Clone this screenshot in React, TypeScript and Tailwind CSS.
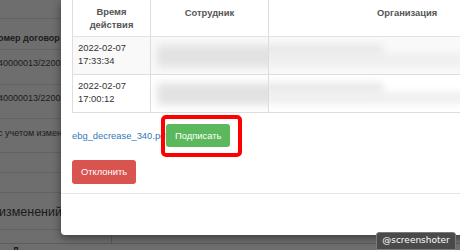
import React from 'react';

const bgRows = [
  { h: 'h-[19px]', text: '', cls: '' },
  { h: 'h-[31px]', text: 'омер договор', cls: 'font-bold items-end pb-[4px]' },
  { h: 'h-[35px]', text: '40000013/22002', cls: 'items-start pt-[7px]' },
  { h: 'h-[34px]', text: '40000013/22002', cls: 'items-start pt-[7px]' },
  { h: 'h-[34px]', text: 'с учетом измен', cls: 'items-center pb-[4px]' },
  { h: 'h-[20px]', text: '', cls: '' },
  { h: 'h-[20px]', text: '', cls: '' },
];

const rows = [
  { date: '2022-02-07', time: '17:33:34', striped: true },
  { date: '2022-02-07', time: '17:00:12', striped: false },
];

export default function App() {
  return (
    <div className="relative w-[460px] h-[250px] overflow-hidden bg-[#6e6e6e] font-['Liberation_Sans',Arial,sans-serif]">
      {/* page behind the dimmed overlay */}
      <div className="flex flex-col text-[9px] text-[#1c1c1c] whitespace-nowrap">
        {bgRows.map((r, i) => (
          <div key={i} className={`flex ${r.h} ${r.cls} border-b border-[#626262]`}>
            <span className="-ml-[2px]">{r.text}</span>
          </div>
        ))}
        <div className="flex items-center h-[37px] border-b border-[#626262] text-[12.5px] text-[#1a1a1a] pt-[3px]">
          <span className="-ml-[1px]">изменений</span>
        </div>
        <div className="flex h-[14px] border-b border-[#5c5c5c]">
          <div className="w-[112px] border-r border-[#5c5c5c]" />
        </div>
        <div className="flex h-[12px] pl-[12px] text-[10px] font-bold">Д</div>
      </div>

      {/* modal */}
      <div className="absolute left-[61px] top-0 w-[420px] h-[235px] bg-white rounded-bl-[4px] shadow-[0_3px_8px_rgba(0,0,0,0.45)] text-[9.4px] leading-[13.4px] text-[#333]">
        <div className="pl-[11px]">
          <div className="border-l border-[#ddd]">
            <div className="flex h-[37px] border-b border-[#e2e2e2]">
              <div className="w-[78px] flex items-center justify-center text-center font-bold text-[#555] border-r border-[#ddd]">
                Время
                <br />
                действия
              </div>
              <div className="w-[118px] flex items-center justify-center font-bold text-[#555] border-r border-[#ddd] -mt-[11px]">
                Сотрудник
              </div>
              <div className="flex-1 flex items-center font-bold text-[#555] -mt-[11px] pl-[108px]">
                Организация
              </div>
            </div>
            {rows.map((r, i) => (
              <div key={i} className={`flex h-[38px] border-b border-[#ddd] ${r.striped ? 'bg-[#f9f9f9]' : 'bg-white'}`}>
                <div className="w-[78px] pl-[5px] pt-[4px] border-r border-[#ddd]">
                  {r.date}
                  <br />
                  {r.time}
                </div>
                <div className="w-[118px] relative border-r border-[#ddd] overflow-hidden">
                  <div className="absolute left-[6px] right-[-10px] top-[8px] h-[22px] bg-[#e2e2e2] blur-[4px]" />
                </div>
                <div className="flex-1 relative overflow-hidden">
                  <div className="absolute left-[-6px] w-[120px] top-[8px] h-[10px] bg-[#e6e6e6] blur-[4px]" />
                  <div className="absolute left-[-6px] right-0 top-[18px] h-[10px] bg-[#ececec] blur-[4px]" />
                </div>
              </div>
            ))}
          </div>

          <div className="flex items-center mt-[11px] h-[23px]">
            <a className="text-[#337ab7] w-[94px] overflow-hidden whitespace-nowrap">ebg_decrease_340.pdf</a>
            <div className="relative">
              <button className="h-[23px] px-[9px] rounded-[3px] bg-[#5cb85c] text-white">Подписать</button>
              <div className="absolute -left-[5px] -right-[12px] -top-[9px] -bottom-[10px] border-[4px] border-[#ff0000] rounded-[5px]" />
            </div>
          </div>

          <button className="mt-[13px] h-[24px] w-[64px] rounded-[3px] bg-[#d9534f] text-white">Отклонить</button>
        </div>
        <div className="mt-[9px] border-t border-[#e5e5e5]" />
      </div>

      {/* watermark */}
      <div className="absolute left-[376px] top-[232px] w-[80px] h-[18px] rounded-t-[3px] bg-[#4a4a4a] border border-[#7a7a7a] flex items-center justify-center text-white text-[9px] whitespace-nowrap font-['DejaVu_Sans',sans-serif]">
        @screenshoter
      </div>
    </div>
  );
}
